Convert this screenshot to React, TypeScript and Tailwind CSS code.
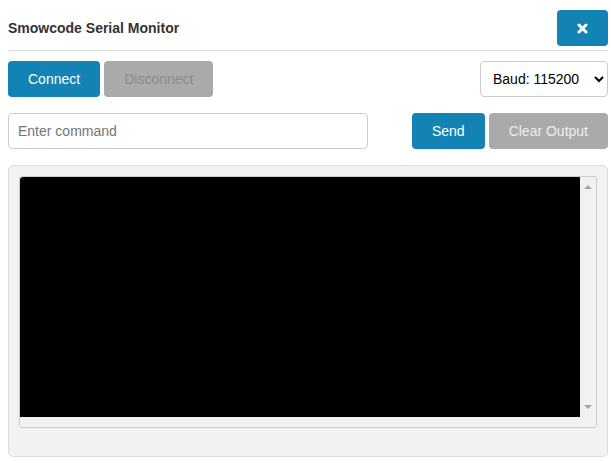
import { useState } from 'react';

const App = () => {
  const [command, setCommand] = useState('');
  const [baud, setBaud] = useState('115200');

  return (
    <div
      className="ml-[8px] w-[600px] text-[14px] text-[#333]"
      style={{ fontFamily: '"Liberation Sans", Arial, sans-serif' }}
    >
      {/* header */}
      <div className="flex items-center justify-between border-b border-[#ddd] pt-[10px] pb-[4px]">
        <span className="text-[14px] font-bold text-[#333]">Smowcode Serial Monitor</span>
        <button className="flex h-[36px] w-[51px] items-center justify-center rounded-[4px] bg-[#1283b3]">
          <svg width="11" height="11" viewBox="0 0 11 11">
            <path d="M2 2 L9 9 M9 2 L2 9" stroke="#fff" strokeWidth="3" strokeLinecap="round" />
          </svg>
        </button>
      </div>

      {/* connection row */}
      <div className="mt-[10px] flex items-center justify-between">
        <div className="flex gap-[4px]">
          <button className="h-[36px] rounded-[4px] bg-[#1283b3] px-[20px] text-white">Connect</button>
          <button className="h-[36px] rounded-[4px] bg-[#aaa] px-[20px] text-[#8a8a8a]">Disconnect</button>
        </div>
        <select
          value={baud}
          onChange={(e) => setBaud(e.target.value)}
          className="h-[36px] w-[128px] rounded-[4px] border border-[#ccc] bg-white pr-[4px] pl-[8px] text-[14px] text-black"
        >
          <option value="9600">Baud: 9600</option>
          <option value="57600">Baud: 57600</option>
          <option value="115200">Baud: 115200</option>
        </select>
      </div>

      {/* command row */}
      <div className="mt-[16px] flex items-center justify-between">
        <input
          value={command}
          onChange={(e) => setCommand(e.target.value)}
          placeholder="Enter command"
          className="h-[36px] w-[360px] rounded-[4px] border border-[#ccc] px-[9px] text-[14px] text-black outline-none placeholder:text-[#757575]"
        />
        <div className="flex gap-[4px]">
          <button className="h-[36px] rounded-[4px] bg-[#1283b3] px-[20px] text-white">Send</button>
          <button className="h-[36px] rounded-[4px] bg-[#aaa] px-[20px] text-[#eee]">Clear Output</button>
        </div>
      </div>

      {/* output */}
      <div className="mt-[16px] h-[292px] rounded-[5px] border border-[#ddd] bg-[#f2f2f2] px-[10px] pt-[10px]">
        <div className="flex h-[252px] flex-col overflow-hidden rounded-[3px] border border-[#ccc] bg-[#f1f1f1]">
          <div className="flex flex-1">
            <div className="flex-1 rounded-tl-[3px] bg-black" />
            <div className="flex w-[16px] flex-col items-center justify-between py-[8px]">
              <div className="h-0 w-0 border-x-[4px] border-b-[4px] border-x-transparent border-b-[#a3a3a3]" />
              <div className="h-0 w-0 border-x-[4px] border-t-[4px] border-x-transparent border-t-[#a3a3a3]" />
            </div>
          </div>
          <div className="h-[10px]" />
        </div>
      </div>
    </div>
  );
};

export default App;
